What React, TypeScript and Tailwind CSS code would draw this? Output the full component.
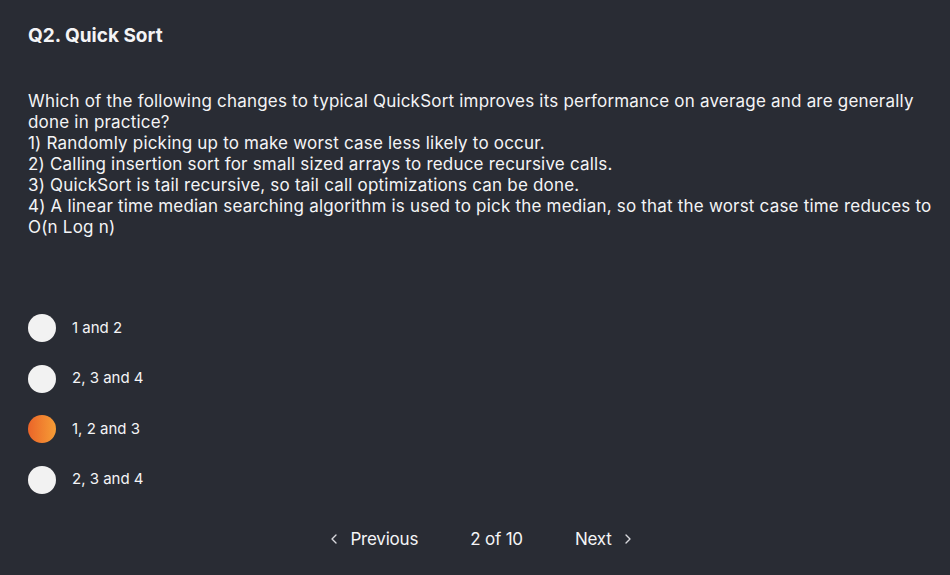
import React from 'react';
import { ChevronLeft, ChevronRight } from 'lucide-react';

const options = ['1 and 2', '2, 3 and 4', '1, 2 and 3', '2, 3 and 4'];

const questionLines = [
  'Which of the following changes to typical QuickSort improves its performance on average and are generally done in practice?',
  '1) Randomly picking up to make worst case less likely to occur.',
  '2) Calling insertion sort for small sized arrays to reduce recursive calls.',
  '3) QuickSort is tail recursive, so tail call optimizations can be done.',
  '4) A linear time median searching algorithm is used to pick the median, so that the worst case time reduces to O(n Log n)',
];

const App: React.FC = () => {
  const selected = 2;

  return (
    <div
      className="h-[575px] w-full bg-[#292c34] text-[#f4f4f6] px-[28px] pt-[25px] flex flex-col"
      style={{ fontFamily: 'Inter, "Noto Sans", sans-serif' }}
    >
      <h2 className="text-[19px] leading-[22px] font-bold">Q2. Quick Sort</h2>

      <div className="mt-[44px] -mr-[14px] text-[17px] leading-[21px] tracking-[0.2px]">
        {questionLines.map((line, i) => (
          <p key={i}>{line}</p>
        ))}
      </div>

      <div className="mt-[76px] flex flex-col gap-[22.5px]">
        {options.map((opt, i) => (
          <label key={i} className="flex items-center gap-[16px] cursor-pointer">
            <span
              className={
                i === selected
                  ? 'w-[28px] h-[28px] rounded-full bg-gradient-to-r from-[#ea6429] to-[#f69d36]'
                  : 'w-[28px] h-[28px] rounded-full bg-[#f2f2f2]'
              }
            />
            <span className="text-[15px]">{opt}</span>
          </label>
        ))}
      </div>

      <div className="mt-[33px] flex items-center justify-center text-[17px] tracking-[-0.2px]">
        <button className="flex items-center gap-[8px] ml-[12px]">
          <ChevronLeft size={16} strokeWidth={2} className="text-[#d9d9de]" />
          <span>Previous</span>
        </button>
        <span className="mx-[52px]">2 of 10</span>
        <button className="flex items-center gap-[8px]">
          <span>Next</span>
          <ChevronRight size={16} strokeWidth={2} className="text-[#d9d9de]" />
        </button>
      </div>
    </div>
  );
};

export default App;
